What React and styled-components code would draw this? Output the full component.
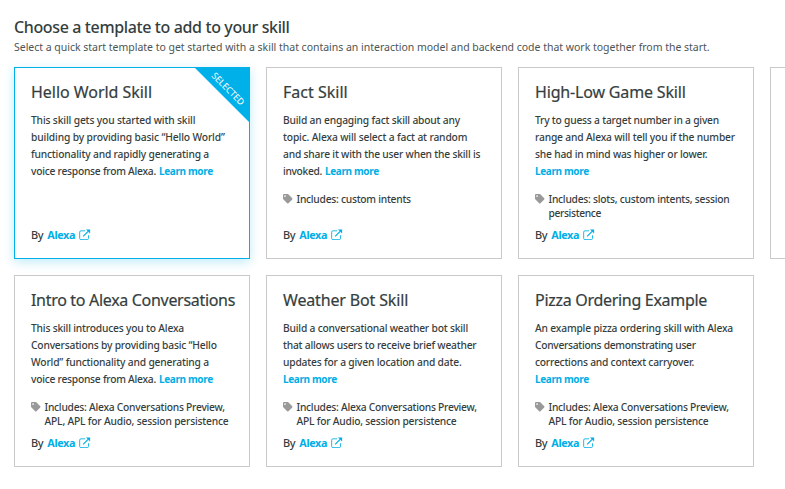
import React from "react";
import styled, { createGlobalStyle } from "styled-components";
import { FaTag } from "react-icons/fa";

const GlobalStyle = createGlobalStyle`
  * { box-sizing: border-box; }
  body {
    margin: 0;
    overflow: hidden;
    background: #fff;
    color: #353e3e;
    font-family: "Noto Sans", "Open Sans", sans-serif;
  }
`;

const Page = styled.main`
  height: 489px;
  padding: 17px 0 0 14px;
  overflow: hidden;
`;

const Heading = styled.h1`
  margin: 0;
  font-size: 16px;
  font-weight: 500;
  line-height: 21px;
  letter-spacing: -0.373px;
  white-space: nowrap;
`;

const Subheading = styled.p`
  margin: 1px 0 12px;
  color: #4c5555;
  font-size: 10.5px;
  line-height: 16px;
  letter-spacing: -0.016px;
  white-space: nowrap;
`;

const Grid = styled.div`
  display: grid;
  grid-template-columns: repeat(4, 236px);
  grid-auto-rows: 192px;
  gap: 16px;
`;

const Card = styled.article`
  position: relative;
  display: flex;
  flex-direction: column;
  padding: 12px 0 15px 16px;
  background: #fff;
  border: 1px solid ${(p) => (p.$selected ? "#00b0e8" : "#c9c9c9")};
  box-shadow: ${(p) => (p.$selected ? "0 3px 10px rgba(0, 176, 232, 0.25)" : "none")};
`;

const Title = styled.h2`
  margin: 0 0 8px;
  font-size: 16px;
  font-weight: 400;
  line-height: 24px;
  letter-spacing: ${(p) => p.$track}px;
  white-space: nowrap;
  -webkit-text-stroke: 0.2px currentColor;
`;

const Description = styled.div`
  font-size: 10.25px;
  font-weight: 500;
  line-height: 17px;
`;

const Line = styled.div`
  display: flex;
  gap: 3px;
  white-space: nowrap;
`;

const Tracked = styled.span`
  letter-spacing: ${(p) => p.$track}px;
`;

const Link = styled.a`
  color: #00aee6;
  font-size: ${(p) => p.$size}px;
  font-weight: 700;
  letter-spacing: ${(p) => p.$track}px;
`;

const Includes = styled.div`
  display: flex;
  gap: 4px;
  margin-top: 12px;
  font-size: 10.25px;
  font-weight: 500;
  line-height: 14px;
`;

const TagIcon = styled(FaTag)`
  flex: none;
  width: 9.5px;
  height: 9.5px;
  margin-top: 2px;
  color: #999;
`;

const Author = styled.div`
  display: flex;
  align-items: center;
  gap: 4px;
  margin-top: auto;
  font-size: 11px;
  font-weight: 500;
  line-height: 16px;
  letter-spacing: -0.35px;
`;

const ExternalSvg = styled.svg`
  width: 11.5px;
  height: 11.5px;
  margin-top: -1px;
  color: #00aee6;
`;

const Ribbon = styled.div`
  position: absolute;
  top: 0;
  right: 0;
  width: 54px;
  height: 54px;
  background: #00b0e8;
  clip-path: polygon(0 0, 100% 0, 100% 100%);
`;

const RibbonText = styled.span`
  position: absolute;
  top: 20.5px;
  left: 33px;
  transform: translate(-50%, -50%) rotate(45deg);
  color: #fff;
  font-size: 9px;
  line-height: 12px;
`;

const ExternalIcon = () => (
  <ExternalSvg viewBox="0 0 12 12" fill="none" aria-hidden="true">
    <path
      d="M6.3 1.9H2A1.3 1.3 0 0 0 .7 3.2v6.6A1.3 1.3 0 0 0 2 11.1h6.6a1.3 1.3 0 0 0 1.3-1.3V6.5"
      stroke="currentColor"
      strokeWidth="0.9"
    />
    <path d="M4.3 7.7 9.5 2.5" stroke="currentColor" strokeWidth="1.3" />
    <path d="M7.2.4h4.4v4.4z" fill="currentColor" />
  </ExternalSvg>
);

// Each line is [text, letter spacing]; "more" marks where the link follows.
const skills = [
  {
    title: ["Hello World Skill", -0.039],
    selected: true,
    lines: [
      ["This skill gets you started with skill", -0.146],
      ["building by providing basic “Hello World”", -0.13],
      ["functionality and rapidly generating a", -0.171],
      ["voice response from Alexa.", -0.246, "more"],
    ],
  },
  {
    title: ["Fact Skill", 0.008],
    lines: [
      ["Build an engaging fact skill about any", -0.178],
      ["topic. Alexa will select a fact at random", -0.147],
      ["and share it with the user when the skill is", -0.195],
      ["invoked.", -0.327, "more"],
    ],
    includes: [["Includes: custom intents", -0.25]],
  },
  {
    title: ["High-Low Game Skill", -0.164],
    lines: [
      ["Try to guess a target number in a given", -0.211],
      ["range and Alexa will tell you if the number", -0.164],
      ["she had in mind was higher or lower.", -0.198],
      ["", 0, "more"],
    ],
    includes: [
      ["Includes: slots, custom intents, session", -0.238],
      ["persistence", -0.36],
    ],
  },
  null,
  {
    title: ["Intro to Alexa Conversations", -0.311],
    lines: [
      ["This skill introduces you to Alexa", -0.187],
      ["Conversations by providing basic “Hello", -0.191],
      ["World” functionality and generating a", -0.161],
      ["voice response from Alexa.", -0.246, "more"],
    ],
    includes: [
      ["Includes: Alexa Conversations Preview,", -0.244],
      ["APL, APL for Audio, session persistence", -0.187],
    ],
  },
  {
    title: ["Weather Bot Skill", -0.15],
    lines: [
      ["Build a conversational weather bot skill", -0.189],
      ["that allows users to receive brief weather", -0.208],
      ["updates for a given location and date.", -0.184],
      ["", 0, "more"],
    ],
    includes: [
      ["Includes: Alexa Conversations Preview,", -0.244],
      ["APL for Audio, session persistence", -0.218],
    ],
  },
  {
    title: ["Pizza Ordering Example", -0.298],
    lines: [
      ["An example pizza ordering skill with Alexa", -0.172],
      ["Conversations demonstrating user", -0.29],
      ["corrections and context carryover.", -0.215],
      ["", 0, "more"],
    ],
    includes: [
      ["Includes: Alexa Conversations Preview,", -0.244],
      ["APL for Audio, session persistence", -0.218],
    ],
  },
];

const TextLine = ({ line: [text, track, more] }) => (
  <Line>
    {text && <Tracked $track={track}>{text}</Tracked>}
    {more && (
      <Link $size={10} $track={-0.36}>
        Learn more
      </Link>
    )}
  </Line>
);

const SkillCard = ({ skill }) => (
  <Card $selected={skill.selected}>
    {skill.selected && (
      <Ribbon>
        <RibbonText>SELECTED</RibbonText>
      </Ribbon>
    )}
    <Title $track={skill.title[1]}>{skill.title[0]}</Title>
    <Description>
      {skill.lines.map((line, i) => (
        <TextLine key={i} line={line} />
      ))}
    </Description>
    {skill.includes && (
      <Includes>
        <TagIcon />
        <div>
          {skill.includes.map((line, i) => (
            <TextLine key={i} line={line} />
          ))}
        </div>
      </Includes>
    )}
    <Author>
      <span>By</span>
      <Link $size={10.75} $track={-0.36}>
        Alexa
      </Link>
      <ExternalIcon />
    </Author>
  </Card>
);

export default function App() {
  return (
    <>
      <GlobalStyle />
      <Page>
        <Heading>Choose a template to add to your skill</Heading>
        <Subheading>
          Select a quick start template to get started with a skill that contains an interaction
          model and backend code that work together from the start.
        </Subheading>
        <Grid>
          {skills.map((skill, i) => (skill ? <SkillCard key={i} skill={skill} /> : <Card key={i} />))}
        </Grid>
      </Page>
    </>
  );
}
